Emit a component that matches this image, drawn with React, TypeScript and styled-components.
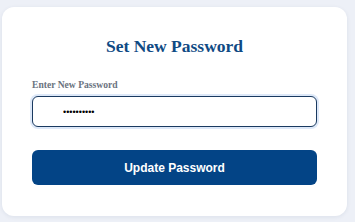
import { FC } from 'react';
import styled, { createGlobalStyle } from 'styled-components';

const Global = createGlobalStyle`
  html, body {
    margin: 0;
    background: #edf0f7;
  }
  body {
    padding: 7px 8px 6px 2px;
    font-family: "Liberation Serif", serif;
  }
`;

const App: FC = () => {
  return (
    <>
      <Global />
      <Card>
        <Title>Set New Password</Title>
        <Form onSubmit={(e) => e.preventDefault()}>
          <Label htmlFor="pw">Enter New Password</Label>
          <Input id="pw" type="password" defaultValue="qwertyuio1" />
          <Button type="submit">Update Password</Button>
        </Form>
      </Card>
    </>
  );
};

export default App;

const Card = styled.div`
  background: #fff;
  border-radius: 12px;
  box-shadow: 0 1px 4px rgba(30, 50, 90, 0.08);
  height: 209px;
  box-sizing: border-box;
  padding: 29px 30px 0 30px;
`;

const Title = styled.h2`
  margin: 0 0 24px;
  text-align: center;
  font-size: 17.5px;
  font-weight: bold;
  color: #0f4a84;
  line-height: 20px;
`;

const Form = styled.form`
  display: flex;
  flex-direction: column;
`;

const Label = styled.label`
  font-size: 9.6px;
  font-weight: bold;
  color: #6b7380;
  line-height: 10px;
  margin-bottom: 6px;
`;

const Input = styled.input`
  height: 31px;
  box-sizing: border-box;
  border: 1px solid #1a3a60;
  border-radius: 6px;
  padding: 0 0 0 30px;
  font-size: 9px;
  color: #000;
  outline: none;
  box-shadow: 0 0 0 2px rgba(180, 205, 240, 0.45);
  font-family: "Liberation Sans", sans-serif;
`;

const Button = styled.button`
  margin-top: 23px;
  height: 35px;
  border: none;
  border-radius: 6px;
  background: #034486;
  color: #fff;
  font-family: "Liberation Sans", Arial, sans-serif;
  font-weight: bold;
  font-size: 12px;
  cursor: pointer;
`;
